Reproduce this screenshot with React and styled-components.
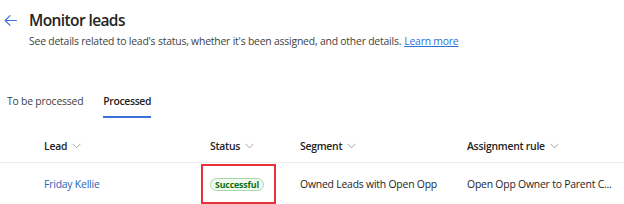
import React from "react";
import styled, { createGlobalStyle } from "styled-components";

const GlobalStyle = createGlobalStyle`
  html, body {
    margin: 0;
    padding: 0;
    background: #ffffff;
  }
  body {
    font-family: "Open Sans", "Noto Sans", sans-serif;
    color: #242424;
  }
`;

const Page = styled.div`
  width: 624px;
  height: 204px;
  overflow: hidden;
  background: #fff;
`;

const Header = styled.div`
  padding: 9px 0 0 4px;
`;

const TitleRow = styled.div`
  display: flex;
  align-items: center;
  gap: 12px;
  height: 22px;
`;

const BackButton = styled.button`
  border: none;
  background: transparent;
  padding: 0;
  width: 13px;
  height: 13px;
  display: flex;
  color: #3a6fd8;
`;

const Title = styled.h1`
  margin: 0;
  font-size: 15.5px;
  line-height: 22px;
  font-weight: 600;
  color: #242424;
  letter-spacing: -0.6px;
`;

const Subtitle = styled.p`
  margin: 3px 0 0 25px;
  font-size: 10.4px;
  line-height: 14px;
  color: #424242;
  letter-spacing: -0.2px;
`;

const Link = styled.a`
  color: #2f6fd8;
  text-decoration: underline;
  margin-left: 3px;
`;

const Tabs = styled.div`
  display: flex;
  gap: 20px;
  margin: 46px 0 0 7px;
`;

const Tab = styled.div`
  font-size: 10.4px;
  line-height: 14px;
  letter-spacing: -0.2px;
  padding-bottom: 8px;
  font-weight: ${(p) => (p.$active ? 600 : 400)};
  letter-spacing: ${(p) => (p.$active ? "-0.35px" : "-0.2px")};
  color: ${(p) => (p.$active ? "#242424" : "#424242")};
  border-bottom: 2px solid ${(p) => (p.$active ? "#3a6fd8" : "transparent")};
`;

const Table = styled.div`
  margin-top: 12px;
`;

const Row = styled.div`
  display: grid;
  grid-template-columns: 166px 90px 167px 1fr;
  padding-left: 44px;
  align-items: center;
  height: ${(p) => (p.$head ? "33px" : "42px")};
  box-sizing: border-box;
  border-bottom: ${(p) => (p.$head ? "1px solid #ececec" : "none")};
`;

const HeadCell = styled.div`
  display: flex;
  align-items: center;
  gap: 5px;
  font-size: 10.4px;
  line-height: 14px;
  font-weight: 600;
  letter-spacing: -0.25px;
  color: #242424;
`;

const Cell = styled.div`
  position: relative;
  font-size: 10.4px;
  line-height: 14px;
  letter-spacing: -0.2px;
  color: ${(p) => (p.$link ? "#2a62b8" : "#242424")};
  white-space: nowrap;
`;

const Badge = styled.span`
  display: inline-flex;
  align-items: center;
  height: 11px;
  padding: 0 4px;
  border: 1px solid #a8d8a8;
  border-radius: 8px;
  background: #f1faf1;
  color: #0e700e;
  font-size: 8.8px;
  font-weight: 700;
  letter-spacing: -0.15px;
  vertical-align: middle;
`;

const Highlight = styled.div`
  position: absolute;
  left: -9px;
  top: -13px;
  width: 75px;
  height: 40px;
  border: 2px solid #e8333b;
  box-sizing: border-box;
  pointer-events: none;
`;

function Chevron() {
  return (
    <svg width="9" height="6" viewBox="0 0 9 6" fill="none">
      <path d="M0.5 0.8 L4.5 4.8 L8.5 0.8" stroke="#9a9a9a" strokeWidth="0.9" />
    </svg>
  );
}

function BackArrow() {
  return (
    <svg width="13" height="13" viewBox="0 0 13 13" fill="none">
      <path
        d="M12.5 6.5 H1.2 M6 1.7 L1.2 6.5 L6 11.3"
        stroke="currentColor"
        strokeWidth="1.1"
        strokeLinecap="round"
        strokeLinejoin="round"
      />
    </svg>
  );
}

const columns = ["Lead", "Status", "Segment", "Assignment rule"];

export default function App() {
  return (
    <Page>
      <GlobalStyle />
      <Header>
        <TitleRow>
          <BackButton aria-label="Back">
            <BackArrow />
          </BackButton>
          <Title>Monitor leads</Title>
        </TitleRow>
        <Subtitle>
          See details related to lead's status, whether it's been assigned, and
          other details.
          <Link href="#">Learn more</Link>
        </Subtitle>
      </Header>
      <Tabs>
        <Tab>To be processed</Tab>
        <Tab $active>Processed</Tab>
      </Tabs>
      <Table>
        <Row $head>
          {columns.map((c) => (
            <HeadCell key={c}>
              {c}
              <Chevron />
            </HeadCell>
          ))}
        </Row>
        <Row>
          <Cell $link>Friday Kellie</Cell>
          <Cell>
            <Badge>Successful</Badge>
            <Highlight />
          </Cell>
          <Cell>Owned Leads with Open Opp</Cell>
          <Cell>Open Opp Owner to Parent C...</Cell>
        </Row>
      </Table>
    </Page>
  );
}
